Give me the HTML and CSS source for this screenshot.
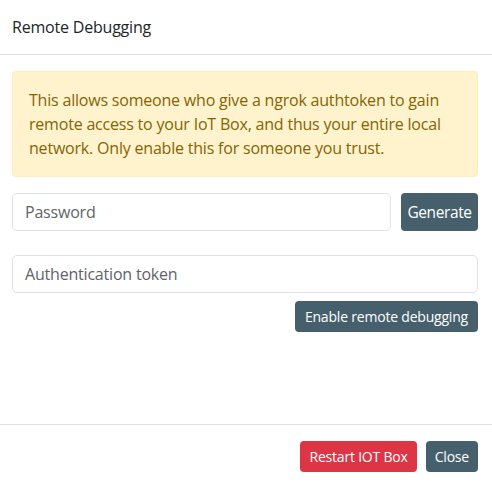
FILE: index.html
```html
<!DOCTYPE html>
<html>
<head>
<meta charset="utf-8">
<link rel="stylesheet" href="styles.css">
</head>
<body>
<div class="modal">
  <div class="modal-header">Remote Debugging</div>
  <div class="modal-body">
    <div class="alert">This allows someone who give a ngrok authtoken to gain remote access to your IoT Box, and thus your entire local network. Only enable this for someone you trust.</div>
    <div class="row">
      <input class="input grow" type="text" placeholder="Password">
      <button class="btn btn-dark btn-gen">Generate</button>
    </div>
    <input class="input token" type="text" placeholder="Authentication token">
    <div class="right">
      <button class="btn btn-dark btn-sm">Enable remote debugging</button>
    </div>
  </div>
  <div class="modal-footer">
    <button class="btn btn-danger btn-sm">Restart IOT Box</button>
    <button class="btn btn-dark btn-sm">Close</button>
  </div>
</div>
</body>
</html>
```
FILE: styles.css
```css
* { box-sizing: border-box; }
html, body { margin: 0; padding: 0; background: #fff; }
body {
  font-family: "Open Sans", "Noto Sans", sans-serif;
  color: #212529;
  letter-spacing: -0.2px;
  width: 492px;
  height: 483px;
}
.modal {
  display: flex;
  flex-direction: column;
  height: 483px;
}
.modal-header {
  height: 55px;
  padding: 15px 12px 0;
  font-size: 16px;
  line-height: 24px;
  border-bottom: 1px solid #dee2e6;
}
.modal-body {
  padding: 16px 14px 0 12px;
  flex: 1;
}
.alert {
  background: #fff3cd;
  border: 1px solid #ffeeba;
  color: #856404;
  border-radius: 4px;
  padding: 16px 16px;
  font-size: 16px;
  line-height: 24px;
}
.row {
  display: flex;
  gap: 10px;
  margin-top: 16px;
}
.input {
  height: 38px;
  border: 1px solid #dee2e6;
  border-radius: 5px;
  padding: 0 12px;
  font-family: inherit;
  letter-spacing: -0.2px;
  font-size: 16px;
  color: #495057;
  background: #fff;
  outline: none;
}
.input::placeholder { color: #606468; }
.grow { flex: 1; min-width: 0; }
.token {
  display: block;
  width: 100%;
  margin-top: 24px;
}
.right {
  display: flex;
  justify-content: flex-end;
  margin-top: 8px;
}
.btn {
  font-family: inherit;
  letter-spacing: -0.2px;
  border: none;
  border-radius: 4px;
  color: #fff;
  font-size: 16px;
  height: 38px;
  padding: 0 9px;
  cursor: pointer;
}
.btn-gen {
  width: 77px;
  padding: 0;
  font-size: 15.5px;
  letter-spacing: -0.4px;
}
.btn-sm {
  font-size: 14px;
  height: 31px;
  padding: 0 9px;
}
.right .btn-sm { padding: 0 10px; }
.btn-dark { background: #465f6c; }
.btn-danger { background: #dc3545; }
.modal-footer {
  border-top: 1px solid #dee2e6;
  height: 59px;
  padding: 16px 14px 0 12px;
  display: flex;
  justify-content: flex-end;
  align-items: flex-start;
  gap: 9px;
}
```
